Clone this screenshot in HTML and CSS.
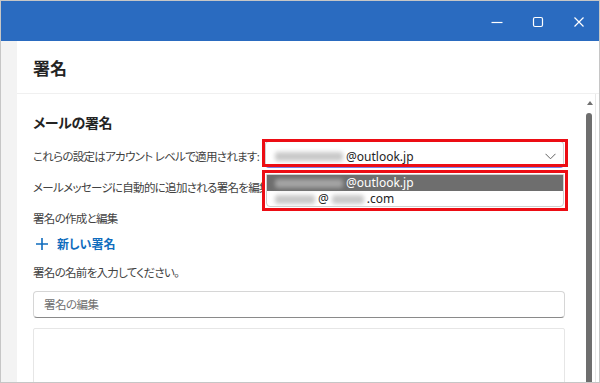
FILE: index.html
```html
<!DOCTYPE html>
<html lang="ja">
<head>
    <meta charset="UTF-8">
    <meta name="viewport" content="width=device-width, initial-scale=1.0">
    <title>署名</title>
    <link rel="stylesheet" href="styles.css">
</head>
<body>
    <div class="window">
        <div class="titlebar">
            <span class="tb-btn">
                <svg width="12" height="12" viewBox="0 0 12 12"><path d="M0.5 6.5h11" stroke="#fff" stroke-width="1.2" fill="none"/></svg>
            </span>
            <span class="tb-btn">
                <svg width="12" height="12" viewBox="0 0 12 12"><rect x="1.5" y="1.5" width="9" height="9" rx="1.5" stroke="#fff" stroke-width="1.2" fill="none"/></svg>
            </span>
            <span class="tb-btn">
                <svg width="12" height="12" viewBox="0 0 12 12"><path d="M1.5 1.5l9 9M10.5 1.5l-9 9" stroke="#fff" stroke-width="1.2" fill="none"/></svg>
            </span>
        </div>

        <div class="frame">
            <div class="rail"></div>
            <div class="main">
                <div class="main-header">
                    <h1>署名</h1>
                </div>
                <div class="scroll">
                    <div class="content">
                        <h2>メールの署名</h2>

                        <div class="account-row">
                            <span class="label">これらの設定はアカウント レベルで適用されます:</span>
                            <div class="select">
                                <span class="email"><span class="blur blur-name"></span>@outlook.jp</span>
                                <svg class="chevron" width="11" height="7" viewBox="0 0 11 7"><path d="M0.5 0.8l5 5 5-5" stroke="#616161" stroke-width="1" fill="none"/></svg>
                                <div class="mark mark-select"></div>
                                <div class="listbox">
                                    <div class="listbox-inner">
                                        <div class="option selected"><span class="blur blur-name dark"></span>@outlook.jp</div>
                                        <div class="option"><span class="blur blur-short"></span>@<span class="blur blur-domain"></span>.com</div>
                                    </div>
                                </div>
                            </div>
                        </div>

                        <p class="desc">メールメッセージに自動的に追加される署名を編集</p>
                        <p class="desc sub">署名の作成と編集</p>
                        <a class="new-sig" href="#">
                            <svg width="12" height="12" viewBox="0 0 12 12"><path d="M6 0v12M0 6h12" stroke="#0f6cbd" stroke-width="1.6" fill="none"/></svg>
                            新しい署名
                        </a>
                        <p class="desc name">署名の名前を入力してください。</p>
                        <div class="input">署名の編集</div>
                        <div class="editor"></div>
                    </div>
                    <div class="scrollbar">
                        <span class="arrow"></span>
                        <span class="thumb"></span>
                    </div>
                </div>
            </div>
        </div>
    </div>
</body>
</html>
```

FILE: styles.css
```css
* {
    box-sizing: border-box;
}

body {
    margin: 0;
    font-family: "Noto Sans", "Noto Sans CJK JP", sans-serif;
    font-feature-settings: "palt";
    color: #242424;
    background: #fff;
}

.window {
    width: 600px;
    height: 383px;
    border: 1px solid #c6c6c6;
    display: flex;
    flex-direction: column;
    overflow: hidden;
}

.titlebar {
    height: 40px;
    flex-shrink: 0;
    background: #2a6bc0;
    display: flex;
    justify-content: flex-end;
}

.tb-btn {
    width: 41px;
    display: flex;
    align-items: center;
    justify-content: center;
    padding-top: 2px;
}

.frame {
    flex: 1;
    display: flex;
    min-height: 0;
}

.rail {
    width: 16px;
    background: #f3f3f3;
}

.main {
    flex: 1;
    display: flex;
    flex-direction: column;
    min-height: 0;
}

.main-header {
    height: 53px;
    border-bottom: 1px solid #f0f0f0;
    padding: 16px 16px 0;
}

.main-header h1 {
    margin: 0;
    font-size: 17px;
    line-height: 24px;
    font-weight: 600;
}

.scroll {
    flex: 1;
    display: flex;
    min-height: 0;
}

.content {
    flex: 1;
    padding-left: 16px;
}

h2 {
    margin: 19px 0 0;
    font-size: 14px;
    line-height: 20px;
    font-weight: 700;
    letter-spacing: -0.4px;
}

.account-row {
    margin-top: 8px;
    display: flex;
    height: 27px;
}

.label {
    width: 232px;
    padding-top: 7px;
    font-size: 11.5px;
    line-height: 18px;
    letter-spacing: -0.7px;
    color: #424242;
    white-space: nowrap;
}

.select {
    position: relative;
    width: 299px;
    height: 27px;
    border: 1px solid #d1d1d1;
    border-bottom: 1px solid #7b83eb;
    border-radius: 4px;
    display: flex;
    align-items: center;
    justify-content: space-between;
    padding: 3px 7px 0 9px;
    font-size: 12px;
    color: #242424;
}

.email {
    display: flex;
    align-items: center;
}

.blur {
    display: inline-block;
    height: 9px;
    background: #c9c9c9;
    filter: blur(2px);
    border-radius: 3px;
    margin-right: 3px;
}

.blur.dark {
    background: #a3a3a3;
}

.blur-name {
    width: 68px;
}

.blur-short {
    width: 40px;
}

.blur-domain {
    width: 32px;
    margin-left: 3px;
}

.mark {
    position: absolute;
    border: 3px solid #ec0d14;
}

.mark-select {
    top: -3px;
    left: -4px;
    width: 306px;
    height: 28px;
}

.listbox {
    position: absolute;
    top: 28px;
    left: -4px;
    width: 306px;
    height: 41px;
    border: 3px solid #ec0d14;
    background: #fff;
    padding: 1px;
}

.listbox-inner {
    height: 100%;
    border: 1px solid #cfcfcf;
    border-radius: 0 0 4px 4px;
    overflow: hidden;
}

.option {
    height: 16px;
    display: flex;
    align-items: center;
    padding-left: 8px;
    font-size: 12px;
    line-height: 16px;
}

.option.selected {
    background: #6e6e6e;
    color: #fff;
}

.desc {
    margin: 11px 0 0;
    font-size: 11.5px;
    line-height: 18px;
    letter-spacing: -0.7px;
    color: #424242;
    white-space: nowrap;
}

.desc.sub {
    margin-top: 13px;
}

.new-sig {
    margin-top: 7px;
    padding-left: 3px;
    display: flex;
    align-items: center;
    gap: 9px;
    height: 18px;
    font-size: 12px;
    font-weight: 700;
    color: #0f6cbd;
    text-decoration: none;
}

.desc.name {
    margin-top: 11px;
}

.input {
    margin-top: 9px;
    height: 27px;
    border: 1px solid #d6d6d6;
    border-bottom-color: #8a8a8a;
    border-radius: 4px;
    padding: 4px 10px 0;
    font-size: 11.5px;
    line-height: 18px;
    letter-spacing: -0.5px;
    color: #707070;
}

.editor {
    margin-top: 10px;
    height: 80px;
    border: 1px solid #e6e6e6;
    border-radius: 2px;
}

.scrollbar {
    width: 31px;
    position: relative;
    border-right: 1px solid #e8e8e8;
    margin-right: 3px;
}

.arrow {
    position: absolute;
    top: 7px;
    left: 22px;
    border-left: 3px solid transparent;
    border-right: 3px solid transparent;
    border-bottom: 4px solid #707070;
}

.thumb {
    position: absolute;
    top: 19px;
    bottom: 0;
    left: 21px;
    width: 6px;
    background: #6e6e6e;
    border-radius: 3px 3px 0 0;
}
```
